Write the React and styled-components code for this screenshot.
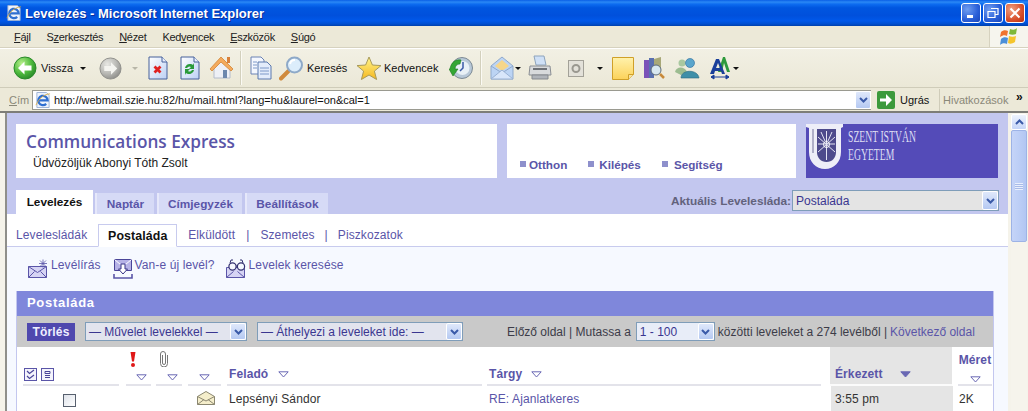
import React from "react";
import styled, { createGlobalStyle } from "styled-components";

const Global = createGlobalStyle`
  html, body { margin: 0; padding: 0; background: #ece9d8; overflow: hidden; }
  #root { width: 1028px; height: 411px; overflow: hidden; }
  * { box-sizing: border-box; }
`;

const UI = `"Liberation Sans", Arial, sans-serif`;
const PURPLE = "#5a55a8";

const Win = styled.div`
  width: 1028px; height: 411px; display: flex; flex-direction: column; overflow: hidden;
  font-family: ${UI};
`;
const TitleBar = styled.div`
  height: 26px; flex: none; display: flex; align-items: center; padding: 0 3px 0 6px;
  background: linear-gradient(#0a5fe6 0, #2a88f5 8%, #0d6cf0 16%, #0056e0 30%, #0050dc 60%, #0058ea 80%, #004fd0 92%, #0040ab 100%);
`;
const TitleText = styled.span`
  margin-left: 3px; color: #fff; font-weight: 700; font-size: 13px; letter-spacing: 0;
  white-space: nowrap; text-shadow: 1px 1px 0 #0a2f9a;
`;
const WinButtons = styled.div`margin-left: auto; display: flex; gap: 2px;`;
const WinBtn = styled.div`
  width: 20px; height: 20px; border: 1px solid #fff; border-radius: 3px; display: flex; align-items: center; justify-content: center;
  background: ${(p) => (p.$close ? "radial-gradient(circle at 30% 30%, #f0a080, #d8502c 60%, #b83010)" : "radial-gradient(circle at 30% 30%, #6f9df0, #2a5fd8 60%, #1a46b8)")};
`;
const MenuBar = styled.div`
  height: 22px; flex: none; display: flex; align-items: center; background: #ece9d8; position: relative;
  border-bottom: 1px solid #d6d2bf; padding-left: 14px; gap: 16px; font-size: 11px; letter-spacing: -0.3px; color: #222;
`;
const MenuItem = styled.span`white-space: nowrap; u { text-decoration: underline; }`;
const FlagBox = styled.div`
  margin-left: auto; width: 39px; height: 21px; background: #f6f5ee; border-left: 1px solid #d6d2bf;
  display: flex; align-items: center; justify-content: center;
`;
const ToolBar = styled.div`
  height: 40px; flex: none; display: flex; align-items: center; padding-left: 13px;
  background: linear-gradient(#f2f0e4, #ebe8d7); border-top: 1px solid #fff; border-bottom: 1px solid #cfccb9;
`;
const Tool = styled.div`
  flex: none; margin-left: ${(p) => p.$ml || 0}px; display: flex; align-items: center; justify-content: center;
  line-height: 0;
`;
const ToolLabel = styled.span`
  flex: none; width: ${(p) => p.$w}px; margin-left: ${(p) => p.$ml || 0}px; font-size: 11px; color: #111; white-space: nowrap;
`;
const Caret = styled.span`
  flex: none; margin-left: ${(p) => p.$ml || 0}px; width: 0; height: 0;
  border-left: 3px solid transparent; border-right: 3px solid transparent;
  border-top: 3px solid ${(p) => p.$c || "#111"};
`;
const ToolSep = styled.span`
  flex: none; margin-left: ${(p) => p.$ml || 0}px; width: 2px; height: 34px; background: #d3d0bd; border-right: 1px solid #fbfaf4;
`;
const AddressBar = styled.div`
  height: 25px; flex: none; display: flex; align-items: center; background: #ece9d8; padding-left: 9px; position: relative;
  border-bottom: 2px solid #7d7d78; font-size: 11px;
`;
const AddrLabel = styled.span`width: 23px; flex: none; color: #8a8878; u { text-decoration: underline; }`;
const AddrField = styled.div`
  flex: none; width: 839px; height: 20px; background: #fff; border: 1px solid #9a9a90; border-right: 0; display: flex; align-items: center;
  padding-left: 2px; color: #111; font-size: 11px; white-space: nowrap;
`;
const AddrText = styled.span`margin-left: 3px;`;
const ComboBtn = styled.span`
  flex: none; margin-left: auto; width: ${(p) => p.$w || 16}px; height: 100%; display: flex; align-items: center; justify-content: center;
  background: linear-gradient(#dfe8fb, #b5c9f2); border: 1px solid #fff; border-radius: 2px; line-height: 0;
`;
const GoLabel = styled.span`flex: none; margin-left: 5px; color: #111; width: 27px;`;
const LinksSep = styled.span`flex: none; margin-left: 12px; width: 1px; height: 22px; background: #cfccb9;`;
const LinksLabel = styled.span`flex: none; margin-left: 3px; color: #8a8878; width: 73px;`;
const Chevrons = styled.span`flex: none; font-weight: 700; font-size: 12px; color: #111; margin-top: -6px;`;

const ContentRow = styled.div`flex: 1; min-height: 0; display: flex; background: #f5f3ea; padding-left: 5px;`;
const Page = styled.div`
  width: 1003px; flex: none; border-left: 2px solid #8f8f8a; display: flex; flex-direction: column; background: #f6f9ff;
`;
const Masthead = styled.div`background: #c3c7ef; padding: 11px 9px 0 9px;`;
const HeadRow = styled.div`display: flex; height: 54px;`;
const Brand = styled.div`width: 481px; background: #fff; padding: 7px 0 0 10px;`;
const BrandName = styled.div`
  font-family: "Open Sans", sans-serif; font-size: 17.2px; font-weight: 600; color: ${PURPLE}; line-height: 22px;
`;
const Welcome = styled.div`font-size: 12px; color: #222; margin: 3px 0 0 7px; line-height: 15px;`;
const NavBox = styled.div`
  width: 289px; margin-left: 10px; background: #fff; display: flex; padding: 32px 0 0 13px; font-size: 11.7px; font-weight: 700; color: ${PURPLE};
`;
const NavLink = styled.span`
  display: flex; align-items: center; height: 16px; margin-right: ${(p) => p.$mr}px; white-space: nowrap;
  &::before { content: ""; width: 6px; height: 6px; background: #8e90cc; margin-right: ${(p) => p.$gap}px; }
`;
const Logo = styled.div`
  width: 192px; margin-left: 10px; background: #544bb8; display: flex; line-height: 0;
`;
const LogoWords = styled.div`margin: 5px 0 0 5px; display: flex; flex-direction: column; gap: 3px;`;
const LogoWord = styled.span`
  font-family: "Liberation Serif", serif; font-size: 17px; line-height: 15px; height: 15px; color: #dcdcf2; transform-origin: left top;
  transform: scaleX(0.57); white-space: nowrap; display: block; width: 130px;
`;
const TabsRow = styled.div`display: flex; align-items: flex-end; height: 36px;`;
const Tab = styled.div`
  height: ${(p) => (p.$active ? 24 : 21)}px; width: ${(p) => p.$w}px; margin-right: ${(p) => p.$mr || 0}px; flex: none;
  background: ${(p) => (p.$active ? "#fff" : "#d6daf6")}; border-left: ${(p) => (p.$active ? 0 : "2px solid #e6e8fa")};
  font-size: 11.8px; font-weight: 700; color: ${(p) => (p.$active ? "#111" : PURPLE)};
  display: flex; align-items: center; justify-content: center; padding-top: ${(p) => (p.$active ? 0 : 1)}px;
`;
const MailboxPick = styled.div`margin-left: auto; display: flex; align-items: center; height: 24px; padding-bottom: 3px;`;
const PickLabel = styled.span`font-size: 11.8px; font-weight: 700; color: #62627c; white-space: nowrap;`;
const Select = styled.div`
  flex: none; width: ${(p) => p.$w}px; height: ${(p) => p.$h || 19}px; margin-left: ${(p) => p.$ml || 0}px;
  background: ${(p) => p.$bg || "#e2e4ee"}; border: 1px solid #7f9db9; display: flex; align-items: center; padding-left: 3px;
  font-size: 12px; color: #3a3690; white-space: nowrap;
`;
const SubNav = styled.div`
  height: 33px; background: #fff; border-bottom: 1px solid #c8cbee; display: flex; align-items: flex-end; padding-left: 9px; font-size: 12px; letter-spacing: 0.1px; color: ${PURPLE};
`;
const SubItem = styled.span`
  flex: none; height: 22px; display: flex; align-items: center; margin-right: ${(p) => p.$mr || 0}px; white-space: nowrap;
`;
const SubActive = styled.span`
  flex: none; width: 79px; height: 23px; margin: 0 11px -1px 11px; background: #fff; border: 1px solid #c8cbee; border-bottom-color: #fff;
  display: flex; align-items: center; justify-content: center; font-size: 12.4px; font-weight: 700; color: #111; padding-top: 1px;
`;
const Actions = styled.div`height: 44px; display: flex; align-items: flex-start; padding: 12px 0 0 21px; font-size: 12px; color: ${PURPLE};`;
const Action = styled.div`display: flex; align-items: flex-start; margin-right: ${(p) => p.$mr}px; white-space: nowrap; line-height: 0;`;
const ActionText = styled.span`line-height: 14px; margin: -1px 0 0 ${(p) => p.$gap}px; letter-spacing: 0.1px;`;
const Panel = styled.div`
  width: 978px; margin-left: 9px; flex: 1; min-height: 0; display: flex; flex-direction: column; background: #fff; border-right: 1px solid #c3c7ef; border-left: 1px solid #c3c7ef;
`;
const PanelHead = styled.div`
  height: 25px; flex: none; background: #7f87db; color: #fff; font-weight: 700; font-size: 13px; letter-spacing: 0.7px; display: flex; align-items: center; padding-left: 10px; padding-bottom: 2px;
`;
const PanelTools = styled.div`
  height: 31px; flex: none; background: #c9c9c9; display: flex; align-items: center; padding: 0 0 0 10px; font-size: 12px; color: #3c3c48; white-space: nowrap;
`;
const DeleteBtn = styled.div`
  width: 48px; height: 18px; background: #4f48ae; color: #eef; font-weight: 700; font-size: 12px; display: flex; align-items: center; justify-content: center; flex: none; letter-spacing: 0.2px;
`;
const PagerText = styled.span`flex: none; margin-left: ${(p) => p.$ml || 0}px; color: ${(p) => p.$c || "inherit"};`;
const HeadGrid = styled.div`display: flex; height: 39px; flex: none;`;
const RowGrid = styled.div`display: flex; height: 25px; flex: none; font-size: 12px; color: #333;`;
const HCell = styled.div`
  flex: none; width: ${(p) => p.$w}px; margin-left: ${(p) => p.$ml || 0}px; display: flex; flex-direction: column; align-items: ${(p) => p.$align || "flex-start"}; justify-content: flex-end;
  border-bottom: 2px solid ${(p) => (p.$shade ? "#fbfbfb" : "#e3e3ea")}; background: ${(p) => (p.$shade ? "#e5e5e5" : "transparent")};
  padding: ${(p) => p.$pad || "0"}; line-height: 0; height: 39px;
`;
const HLabel = styled.div`
  display: flex; align-items: center; font-size: 12px; font-weight: 700; color: ${PURPLE}; line-height: 14px; letter-spacing: 0.1px; white-space: nowrap;
  margin-bottom: ${(p) => p.$mb || 0}px;
`;
const CheckIcons = styled.div`display: flex; gap: 4px;`;
const HeadGlyph = styled.div`margin-bottom: 7px; line-height: 0;`;
const Tri = styled.svg`flex: none; margin-left: ${(p) => p.$ml || 0}px; display: block;`;
const Cell = styled.div`
  flex: none; width: ${(p) => p.$w}px; margin-left: ${(p) => p.$ml || 0}px; display: flex; align-items: center; justify-content: ${(p) => p.$just || "flex-start"};
  background: ${(p) => (p.$shade ? "#e5e5e5" : "transparent")}; color: ${(p) => p.$c || "inherit"}; white-space: nowrap; padding-left: ${(p) => p.$pl || 0}px; letter-spacing: 0.1px;
`;
const CheckBox = styled.span`
  width: 13px; height: 13px; margin-top: 3px; border: 1px solid #57606e; background: linear-gradient(135deg, #dfe3ea, #fff);
`;
const EnvelopeSlot = styled.span`margin-top: -2px; line-height: 0;`;
const Scrollbar = styled.div`width: 16px; margin-left: 3px; flex: none; display: flex; flex-direction: column; background: #f6f4ec; padding-top: 1px;`;
const ScrollBtn = styled.div`
  height: 16px; flex: none; background: linear-gradient(#eef3fd, #c5d5f8); border: 1px solid #fff; border-radius: 2px; display: flex; align-items: center; justify-content: center; line-height: 0;
`;
const ScrollThumb = styled.div`
  height: 112px; flex: none; background: linear-gradient(90deg, #c5d4f8, #bccef6 50%, #b2c6f2); border: 1px solid #9db3e6; border-radius: 2px; display: flex; align-items: center; justify-content: center;
`;
const Grip = styled.span`width: 8px; height: 7px; background: repeating-linear-gradient(#e8effd 0 1px, #a8bbe8 1px 2px);`;

const Chev = ({ c = "#3a5aa8", w = 9 }) => (
  <svg width={w} height="6" viewBox="0 0 9 6"><path d="M1 1l3.500 3.500L8 1" fill="none" stroke={c} strokeWidth="2" /></svg>
);
const DownTri = ({ ml, fill }) => (
  <Tri $ml={ml} width="11" height="7" viewBox="0 0 11 7"><path d="M.8.8h9.400L5.500 6z" fill={fill || "#fff"} stroke="#6a68b4" /></Tri>
);

const Orb = ({ id, a, b, c, arrow, size = 24, dir = "left" }) => (
  <svg width={size} height={size} viewBox="0 0 24 24">
    <defs><radialGradient id={id} cx="35%" cy="30%" r="75%"><stop offset="0" stopColor={a} /><stop offset=".6" stopColor={b} /><stop offset="1" stopColor={c} /></radialGradient></defs>
    <circle cx="12" cy="12" r="11" fill={`url(#${id})`} stroke={c} strokeWidth="1" />
    <path d={dir === "left" ? "M5 12l6.500-6.500v4h7v5h-7v4z" : "M19 12l-6.500-6.500v4h-7v5h7v4z"} fill={arrow} />
  </svg>
);
const Paper = ({ children, id }) => (
  <svg width="20" height="24" viewBox="0 0 20 24">
    <defs><linearGradient id={id} x1="0" y1="0" x2="1" y2="1"><stop offset="0" stopColor="#fff" /><stop offset="1" stopColor="#bcd0f4" /></linearGradient></defs>
    <path d="M1 1h13l5 5v17H1z" fill={`url(#${id})`} stroke="#47609a" />
    <path d="M14 1v5h5" fill="#e8eefb" stroke="#47609a" />
    {children}
  </svg>
);
const Home = () => (
  <svg width="25" height="26" viewBox="0 0 25 26">
    <path d="M5 13v10h16V13L13 6z" fill="#eef0f6" stroke="#b4bccb" />
    <rect x="14" y="15" width="4" height="8" fill="#6c87ad" />
    <path d="M1 14L12 2l12 12-2 2-10-9-9 9z" fill="#f4aa5c" stroke="#d8924a" />
    <rect x="18" y="2" width="3" height="6" fill="#d8803a" />
  </svg>
);
const Copy = () => (
  <svg width="22" height="24" viewBox="0 0 22 24">
    <path d="M1 1h10l3 3v14H1z" fill="#f4f7fe" stroke="#6a82b4" />
    <path d="M8 6h9l4 4v13H8z" fill="#e3ecfb" stroke="#5a78ae" />
    <path d="M10 12h9M10 15h9M10 18h9M3 6h4M3 9h4M3 12h4" stroke="#7c98c8" />
  </svg>
);
const Search = () => (
  <svg width="25" height="25" viewBox="0 0 25 25">
    <path d="M9.500 15L2 22.500" stroke="#d08a3c" strokeWidth="4" strokeLinecap="round" />
    <circle cx="15.500" cy="9" r="7.500" fill="#dcedfb" stroke="#8ea9c8" strokeWidth="2" />
    <path d="M11 8a5 5 0 0 1 5-4" stroke="#fff" strokeWidth="2" fill="none" />
  </svg>
);
const Star = () => (
  <svg width="26" height="25" viewBox="0 0 26 25">
    <defs><linearGradient id="st" x1="0" y1="0" x2="0" y2="1"><stop offset="0" stopColor="#fff58c" /><stop offset="1" stopColor="#f5b71e" /></linearGradient></defs>
    <path d="M13 1l3.400 8 8.600.6-6.600 5.500 2.200 8.400L13 19l-7.600 4.500 2.200-8.400L1 9.600 9.600 9z" fill="url(#st)" stroke="#a89a5a" />
  </svg>
);
const History = () => (
  <svg width="25" height="25" viewBox="0 0 25 25">
    <circle cx="13" cy="12" r="10.500" fill="#b8c8d8" stroke="#7d8a94" />
    <circle cx="13.500" cy="12" r="7" fill="#e8f0f6" />
    <path d="M14 6v6l-3 3" stroke="#3a5aa8" strokeWidth="1.500" fill="none" />
    <path d="M1 13c1-7 6-10 11-9L11 8c-3 0-5 2-5 5h3l-5 7-4-7z" fill="#34a634" stroke="#1f7a24" strokeWidth=".6" />
  </svg>
);
const MailOpen = () => (
  <svg width="24" height="26" viewBox="0 0 24 26">
    <path d="M1 11L12 2l11 9v13H1z" fill="#bcd4f4" stroke="#8fa9cc" />
    <path d="M5 11l7-6 7 6-7 5z" fill="#f6d68a" />
    <path d="M1 11l11 7 11-7" fill="none" stroke="#8fa9cc" />
    <path d="M1 24l11-9 11 9z" fill="#d8e6fa" stroke="#9ab2d4" />
  </svg>
);
const Printer = () => (
  <svg width="24" height="26" viewBox="0 0 24 26">
    <path d="M6 1h10l2 9H8z" fill="#cfe0f6" stroke="#8ea4bc" />
    <path d="M2 11h20l1 9H1z" fill="#d8dadc" stroke="#8a8e94" />
    <path d="M4 20h16v4H4z" fill="#b0b4ba" stroke="#85898f" />
    <path d="M5 14h14" stroke="#6d7177" strokeWidth="2" />
  </svg>
);
const BoxIcon = () => (
  <svg width="16" height="17" viewBox="0 0 16 17">
    <rect x=".5" y=".5" width="15" height="16" fill="#e3e1d9" stroke="#a3a198" />
    <circle cx="8" cy="8.500" r="3.500" fill="none" stroke="#9a9890" strokeWidth="2" />
  </svg>
);
const Note = () => (
  <svg width="22" height="23" viewBox="0 0 22 23">
    <defs><linearGradient id="nt" x1="0" y1="0" x2="0" y2="1"><stop offset="0" stopColor="#fff2ac" /><stop offset="1" stopColor="#fcd25a" /></linearGradient></defs>
    <path d="M.5.5h21v17l-5 5H.5z" fill="url(#nt)" stroke="#d0a028" />
    <path d="M16.500 22.500v-5h5" fill="#f6e2a0" stroke="#d0a028" />
  </svg>
);
const Research = () => (
  <svg width="22" height="24" viewBox="0 0 22 24">
    <rect x="1" y="4" width="5" height="18" fill="#7a52b8" />
    <rect x="6" y="2" width="5" height="20" fill="#5a70b0" />
    <path d="M11 3l7-2v12h-7z" fill="#a8a878" />
    <circle cx="13" cy="14" r="5" fill="#d8e8f0" stroke="#5c6a78" />
    <path d="M17 18l4 4" stroke="#c88a3a" strokeWidth="2.500" />
  </svg>
);
const Messenger = () => (
  <svg width="26" height="22" viewBox="0 0 26 22">
    <circle cx="8" cy="6" r="3.500" fill="#a9c8a0" />
    <path d="M1 15c1-6 10-6 12 0l-6 3z" fill="#9cbc90" />
    <circle cx="16" cy="6" r="4.500" fill="#5aa6cc" stroke="#2a6a9a" strokeWidth=".6" />
    <path d="M7 21c0-9 17-9 18 0z" fill="#3f8fa8" stroke="#2a6a80" strokeWidth=".6" />
  </svg>
);
const FontSize = () => (
  <svg width="22" height="24" viewBox="0 0 22 24">
    <path d="M9 16L14 1h2l5 15h-3l-3-9-2 9z" fill="#2e9a3c" />
    <path d="M1 18L7 3h3l6 15h-3l-1-3H6l-1 3zM7 12h4L9 7z" fill="#1a3f9a" />
    <path d="M2 21h18M2 21l3-2v4zM20 21l-3-2v4z" stroke="#1a3f9a" fill="#1a3f9a" />
  </svg>
);
const IeIcon = ({ size = 17 }) => (
  <svg width={size} height={size} viewBox="0 0 17 17">
    <path d="M2 .5h10l3 3v13H2z" fill="#eef3fb" stroke="#9ab0d4" />
    <path d="M3.500 9h10a5 5 0 1 0-1.600 3.700" fill="none" stroke="#2f6fd0" strokeWidth="2.400" />
    <path d="M1 14C4 7 10 2 16 2" stroke="#e0b040" strokeWidth=".9" fill="none" />
  </svg>
);
const GoIcon = () => (
  <svg width="18" height="18" viewBox="0 0 18 18">
    <rect width="18" height="18" rx="2" fill="#3c9a3c" />
    <path d="M3 7.500h6V3l6 6-6 6v-4.500H3z" fill="#fff" />
  </svg>
);
const Flag = () => (
  <svg width="18" height="19" viewBox="0 0 18 19">
    <path d="M1 6C3 4 6 4 8 5L7 10C5 9 3 9 0 11z" fill="#f0742e" transform="translate(0 -1)" />
    <path d="M10 2c3 1 5 1 7-1l-1 6c-2 1-5 1-7 0z" fill="#7eb93a" />
    <path d="M0 12c2-2 5-2 7-1l-1 6c-2-1-5-1-7 1z" fill="#4b8fd8" transform="translate(1 0)" />
    <path d="M9 9c2 1 5 1 7 0l-1 6c-3 2-5 2-7 1z" fill="#f5c52c" />
  </svg>
);
const Compose = () => (
  <svg width="20" height="20" viewBox="0 0 20 20">
    <path d="M.5 7.500h18v11H.5z" fill="#d6d4f4" stroke="#5a55a8" />
    <path d="M.5 7.500l9 6 9-6M.5 18.500l6-6M18.500 18.500l-6-6" fill="none" stroke="#5a55a8" />
    <path d="M15 .5v8M11 4.500h8M12 1.500l6 6M18 1.500l-6 6" stroke="#5a55a8" strokeWidth=".8" />
  </svg>
);
const Fetch = () => (
  <svg width="20" height="20" viewBox="0 0 20 20">
    <path d="M1.500.5h17v11h-17z" fill="#b6b2e6" stroke="#4a4598" />
    <path d="M1.500.5l6 5M18.500.5l-6 5" stroke="#fff" />
    <path d="M8 5h4v5h2.500L10 15l-4.500-5H8z" fill="#fff" stroke="#3a3688" />
    <path d="M1 15v4h18v-4" fill="none" stroke="#5a55a8" strokeWidth="1.600" />
  </svg>
);
const Glasses = () => (
  <svg width="20" height="20" viewBox="0 0 20 20">
    <path d="M.5 8.500h18v10H.5z" fill="#d6d4f4" stroke="#5a55a8" />
    <path d="M.5 18.500l7-6M18.500 18.500l-7-6" stroke="#5a55a8" />
    <circle cx="6.500" cy="7.500" r="3.600" fill="#f6f8ff" stroke="#333070" strokeWidth="1.200" />
    <circle cx="15" cy="7.500" r="3.600" fill="#f6f8ff" stroke="#333070" strokeWidth="1.200" />
    <path d="M10 7h1.500M4 4l1-3h2M17 4l-1-3h-2" fill="none" stroke="#333070" />
  </svg>
);
const SelectAll = () => (
  <svg width="13" height="13" viewBox="0 0 13 13">
    <rect x=".5" y=".5" width="12" height="12" fill="#f4f4fc" stroke="#5a55a8" />
    <path d="M3 3l2.500 2.500L10 2M3 8l2.500 2.500L10 7" fill="none" stroke="#4a4598" strokeWidth="1.200" />
  </svg>
);
const SelectInv = () => (
  <svg width="13" height="13" viewBox="0 0 13 13">
    <rect x=".5" y=".5" width="12" height="12" fill="#f4f4fc" stroke="#5a55a8" />
    <path d="M4 3.500h5v2H4zM4 7.500h5M4 9.500h5" fill="none" stroke="#4a4598" />
  </svg>
);
const Bang = () => (
  <svg width="6" height="15" viewBox="0 0 6 15"><path d="M.5 0h5L4 9.500H2z" fill="#e01818" /><circle cx="3" cy="13" r="2" fill="#e01818" /></svg>
);
const Clip = () => (
  <svg width="8" height="16" viewBox="0 0 8 16"><path d="M2.500 4v8a1.500 1.500 0 0 0 3 0V3a2.500 2.500 0 0 0-5 0v9.500a3.500 3.500 0 0 0 7 0V4" fill="none" stroke="#777" strokeWidth="1" /></svg>
);
const Envelope = () => (
  <svg width="18" height="14" viewBox="0 0 18 14">
    <path d="M.5 5.500L9 .5l8.500 5v8H.5z" fill="#f5eecb" stroke="#8a8670" />
    <path d="M.5 5.500L9 10l8.500-4.500M.5 13.500L7 8.500M17.500 13.500L11 8.500" fill="none" stroke="#8a8670" />
  </svg>
);
const ULogo = () => (
  <svg width="37" height="45" viewBox="0 0 37 45" style={{ flex: "none" }}>
    <path d="M0 0h37v3l-2 1v24c0 10-7 17-16 17S3 38 3 28V4L0 3z" fill="#eeeef8" />
    <path d="M11 5h19v23c0 6-4 10-9.500 10S11 34 11 28z" fill="#4d4a8c" />
    <path d="M7 5v24" stroke="#9a9ab8" strokeWidth="1.500" />
    <path d="M20.500 7v29M12 13l17 15M29 13L12 28M12 20h17M15 8l4 9M26 8l-4 9" stroke="#e4e4f4" strokeWidth="1" />
    <circle cx="20.500" cy="20.500" r="3" fill="none" stroke="#fff" />
  </svg>
);

export default function App() {
  return (
    <Win>
      <Global />
      <TitleBar>
        <IeIcon size={16} />
        <TitleText>Levelezés - Microsoft Internet Explorer</TitleText>
        <WinButtons>
          <WinBtn><svg width="10" height="10" viewBox="0 0 10 10"><rect x="1" y="7" width="6" height="3" fill="#fff" /></svg></WinBtn>
          <WinBtn><svg width="12" height="12" viewBox="0 0 12 12"><path d="M4 1.500h7v6H8.500M1 4.500h7v6H1z" fill="none" stroke="#fff" strokeWidth="1.200" /></svg></WinBtn>
          <WinBtn $close><svg width="12" height="12" viewBox="0 0 12 12"><path d="M1.500 1.500l9 9M10.500 1.500l-9 9" stroke="#fff" strokeWidth="2" /></svg></WinBtn>
        </WinButtons>
      </TitleBar>
      <MenuBar>
        <MenuItem><u>F</u>ájl</MenuItem>
        <MenuItem>S<u>z</u>erkesztés</MenuItem>
        <MenuItem><u>N</u>ézet</MenuItem>
        <MenuItem>Ked<u>v</u>encek</MenuItem>
        <MenuItem><u>E</u>szközök</MenuItem>
        <MenuItem><u>S</u>úgó</MenuItem>
        <FlagBox><Flag /></FlagBox>
      </MenuBar>
      <ToolBar>
        <Tool><Orb id="bk" a="#b8f08c" b="#4cb83c" c="#2a8a2a" arrow="#fff" /></Tool>
        <ToolLabel $w={39} $ml={4}>Vissza</ToolLabel>
        <Caret />
        <Tool $ml={13}><Orb id="fw" a="#e8e8e4" b="#b8b8b4" c="#8e8e8a" arrow="#f4f4f0" size={23} dir="right" /></Tool>
        <Caret $ml={10} $c="#b8b6a8" />
        <Tool $ml={10}><Paper id="p1"><path d="M6.500 10.500l6 6M12.500 10.500l-6 6" stroke="#e02020" strokeWidth="2.800" /></Paper></Tool>
        <Tool $ml={12}><Paper id="p2"><path d="M5 12a5 5 0 0 1 8-3l1-2v6h-5l2-2a3 3 0 0 0-4 1zM14 14a5 5 0 0 1-8 3l-1 2v-6h5l-2 2a3 3 0 0 0 4-1z" fill="#2a9a3a" /></Paper></Tool>
        <Tool $ml={9}><Home /></Tool>
        <ToolSep $ml={6} />
        <Tool $ml={8}><Copy /></Tool>
        <Tool $ml={7}><Search /></Tool>
        <ToolLabel $w={38} $ml={3}>Keresés</ToolLabel>
        <Tool $ml={11}><Star /></Tool>
        <ToolLabel $w={53} $ml={2}>Kedvencek</ToolLabel>
        <Tool $ml={12}><History /></Tool>
        <ToolSep $ml={6} />
        <Tool $ml={8}><MailOpen /></Tool>
        <Caret $ml={1} />
        <Tool $ml={7}><Printer /></Tool>
        <Tool $ml={16}><BoxIcon /></Tool>
        <Caret $ml={13} />
        <Tool $ml={9}><Note /></Tool>
        <Tool $ml={9}><Research /></Tool>
        <Tool $ml={9}><Messenger /></Tool>
        <Tool $ml={9}><FontSize /></Tool>
        <Caret $ml={2} />
      </ToolBar>
      <AddressBar>
        <AddrLabel><u>C</u>ím</AddrLabel>
        <AddrField>
          <IeIcon size={16} />
          <AddrText>http://webmail.szie.hu:82/hu/mail.html?lang=hu&amp;laurel=on&amp;cal=1</AddrText>
          <ComboBtn><Chev /></ComboBtn>
        </AddrField>
        <Tool $ml={6}><GoIcon /></Tool>
        <GoLabel>Ugrás</GoLabel>
        <LinksSep />
        <LinksLabel>Hivatkozások</LinksLabel>
        <Chevrons>»</Chevrons>
      </AddressBar>
      <ContentRow>
        <Page>
          <Masthead>
            <HeadRow>
              <Brand>
                <BrandName>Communications Express</BrandName>
                <Welcome>Üdvözöljük Abonyi Tóth Zsolt</Welcome>
              </Brand>
              <NavBox>
                <NavLink $mr={21} $gap={3}>Otthon</NavLink>
                <NavLink $mr={21} $gap={5}>Kilépés</NavLink>
                <NavLink $mr={0} $gap={6}>Segítség</NavLink>
              </NavBox>
              <Logo>
                <ULogo />
                <LogoWords>
                  <LogoWord>SZENT ISTVÁN</LogoWord>
                  <LogoWord>EGYETEM</LogoWord>
                </LogoWords>
              </Logo>
            </HeadRow>
            <TabsRow>
              <Tab $active $w={77} $mr={2}>Levelezés</Tab>
              <Tab $w={59} $mr={3}>Naptár</Tab>
              <Tab $w={85} $mr={3}>Címjegyzék</Tab>
              <Tab $w={83}>Beállítások</Tab>
              <MailboxPick>
                <PickLabel>Aktuális Levelesláda:</PickLabel>
                <Select $w={207} $h={21} $ml={1} $bg="#e4e4e4">
                  Postaláda
                  <ComboBtn><Chev /></ComboBtn>
                </Select>
              </MailboxPick>
            </TabsRow>
          </Masthead>
          <SubNav>
            <SubItem>Levelesládák</SubItem>
            <SubActive>Postaláda</SubActive>
            <SubItem $mr={11}>Elküldött</SubItem>
            <SubItem $mr={11}>|</SubItem>
            <SubItem $mr={10}>Szemetes</SubItem>
            <SubItem $mr={10}>|</SubItem>
            <SubItem>Piszkozatok</SubItem>
          </SubNav>
          <Actions>
            <Action $mr={12}><Compose /><ActionText $gap={3}>Levélírás</ActionText></Action>
            <Action $mr={11}><Fetch /><ActionText $gap={2}>Van-e új levél?</ActionText></Action>
            <Action $mr={0}><Glasses /><ActionText $gap={3}>Levelek keresése</ActionText></Action>
          </Actions>
          <Panel>
            <PanelHead>Postaláda</PanelHead>
            <PanelTools>
              <DeleteBtn>Törlés</DeleteBtn>
              <Select $w={162} $ml={10}>— Művelet levelekkel —<ComboBtn><Chev /></ComboBtn></Select>
              <Select $w={206} $ml={10}>— Áthelyezi a leveleket ide: —<ComboBtn><Chev /></ComboBtn></Select>
              <PagerText $ml={44}>Előző oldal | Mutassa a</PagerText>
              <Select $w={79} $ml={5} $bg="#e8edf8">1 - 100<ComboBtn><Chev /></ComboBtn></Select>
              <PagerText $ml={3}>közötti leveleket a 274 levélből |</PagerText>
              <PagerText $ml={3} $c={PURPLE}>Következő oldal</PagerText>
            </PanelTools>
            <HeadGrid>
              <HCell $w={96} $ml={6} $pad="0 0 3px 1px">
                <CheckIcons><SelectAll /><SelectInv /></CheckIcons>
              </HCell>
              <HCell $w={25} $ml={7} $pad="0 0 3px 4px">
                <HeadGlyph><Bang /></HeadGlyph>
                <DownTri ml={6} />
              </HCell>
              <HCell $w={26} $ml={5} $pad="0 0 3px 4px">
                <HeadGlyph><Clip /></HeadGlyph>
                <DownTri ml={7} />
              </HCell>
              <HCell $w={33} $ml={6} $align="center" $pad="0 0 3px">
                <DownTri />
              </HCell>
              <HCell $w={255} $ml={6} $pad="0 0 3px 2px"><HLabel>Feladó<DownTri ml={10} /></HLabel></HCell>
              <HCell $w={334} $ml={5} $pad="0 0 3px 2px"><HLabel>Tárgy<DownTri ml={9} /></HLabel></HCell>
              <HCell $w={122} $ml={9} $shade $pad="0 0 3px 5px"><HLabel>Érkezett<DownTri ml={17} fill="#6a68b4" /></HLabel></HCell>
              <HCell $w={34} $ml={6} $align="center" $pad="0 0 1px"><HLabel $mb={9}>Méret</HLabel><DownTri /></HCell>
            </HeadGrid>
            <RowGrid>
              <Cell $w={172} $pl={46}><CheckBox /></Cell>
              <Cell $w={33} $just="center"><EnvelopeSlot><Envelope /></EnvelopeSlot></Cell>
              <Cell $w={255} $ml={6} $pl={1}>Lepsényi Sándor</Cell>
              <Cell $w={334} $ml={5} $pl={1} $c={PURPLE}>RE: Ajanlatkeres</Cell>
              <Cell $w={122} $ml={9} $shade $pl={4}>3:55 pm</Cell>
              <Cell $w={34} $ml={6}>2K</Cell>
            </RowGrid>
          </Panel>
        </Page>
        <Scrollbar>
          <ScrollBtn><svg width="9" height="6" viewBox="0 0 9 6"><path d="M1 5l3.500-3.500L8 5" fill="none" stroke="#3a5aa8" strokeWidth="2" /></svg></ScrollBtn>
          <ScrollThumb><Grip /></ScrollThumb>
        </Scrollbar>
      </ContentRow>
    </Win>
  );
}
